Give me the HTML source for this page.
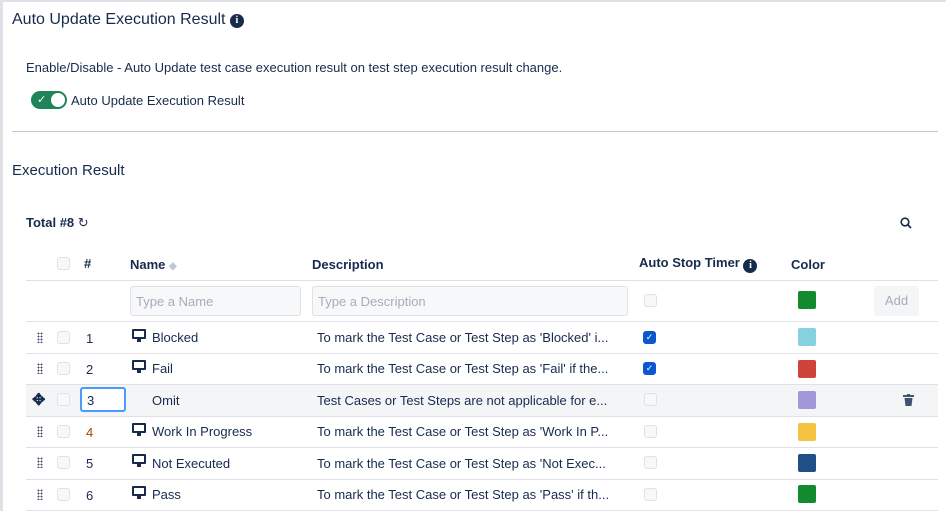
<!DOCTYPE html>
<html><head><style>
*{box-sizing:border-box;margin:0;padding:0}
body{width:946px;height:511px;overflow:hidden;background:#fff;font-family:"Liberation Sans",sans-serif;color:#172b4d;position:relative}
.abs{position:absolute}
.frame{position:absolute;left:0;top:0;width:946px;height:511px;border-left:3px solid #dfe1e6;border-top:2px solid #dfe1e6}
.info{display:inline-block;width:14px;height:14px;border-radius:50%;background:#172b4d;color:#fff;font-size:10px;font-weight:bold;text-align:center;line-height:14px;font-family:"Liberation Serif",serif}
.cb{position:absolute;width:13px;height:13px;border:1px solid #dfe1e6;border-radius:3px;background:#f7f8f9}
.cbc{background:#0c57d0;border-color:#0c57d0;color:#fff;font-size:9px;line-height:11px;text-align:center}
.line{position:absolute;left:26px;width:912px;height:1px;background:#dfe1e6}
.t{position:absolute;font-size:13px;white-space:nowrap}
.sw{position:absolute;left:798px;width:18px;height:18px;border-radius:2px}
.drag{position:absolute;left:37px;width:6px;height:11px;background-image:radial-gradient(circle,#42526e 0.8px,transparent 1px);background-size:3px 3px}
.mon{position:absolute;left:132px;width:14px;height:10px;border:2px solid #172b4d;border-radius:1px}
.mon:after{content:"";position:absolute;left:3px;top:8px;width:4px;height:3px;background:#172b4d}
</style></head><body>
<div class="frame"></div>
<div class="t" style="left:12px;top:11px;font-size:16px">Auto Update Execution Result <span class="info" style="vertical-align:1px">i</span></div>
<div class="t" style="left:26px;top:60px;font-size:13px">Enable/Disable - Auto Update test case execution result on test step execution result change.</div>
<div class="abs" style="left:31px;top:91px;width:36px;height:18px;border-radius:9px;background:#1f845a"><span style="position:absolute;left:6px;top:2px;color:#fff;font-size:11px">✓</span><div style="position:absolute;right:2px;top:2px;width:14px;height:14px;border-radius:50%;background:#fff"></div></div>
<div class="t" style="left:71px;top:93px;font-size:13px">Auto Update Execution Result</div>
<div class="abs" style="left:12px;top:131px;width:926px;height:1px;background:#c1c7d0"></div>
<div class="t" style="left:12px;top:162px;font-size:15px">Execution Result</div>
<div class="t" style="left:26px;top:215px;font-weight:bold;font-size:13px">Total #8 <span style="font-weight:normal">↻</span></div>
<svg class="abs" style="left:900px;top:217px" width="12" height="12" viewBox="0 0 12 12"><circle cx="5" cy="5" r="3.8" fill="none" stroke="#172b4d" stroke-width="1.6"/><line x1="8" y1="8" x2="11" y2="11" stroke="#172b4d" stroke-width="1.8"/></svg>
<div class="cb" style="left:57px;top:257px"></div>
<div class="t" style="left:84px;top:256px;font-weight:bold">#</div>
<div class="t" style="left:130px;top:257px;font-weight:bold">Name <span style="color:#c1c7d0;font-size:10px">◆</span></div>
<div class="t" style="left:312px;top:257px;font-weight:bold">Description</div>
<div class="t" style="left:639px;top:255px;font-weight:bold">Auto Stop Timer <span class="info" style="vertical-align:-1px">i</span></div>
<div class="t" style="left:791px;top:257px;font-weight:bold">Color</div>
<div class="line" style="top:280px"></div>
<div class="abs" style="left:130px;top:286px;width:171px;height:30px;border:1px solid #dfe1e6;border-radius:3px;background:#f7f8f9;font-size:13px;color:#a5adba;padding:7px 5px">Type a Name</div>
<div class="abs" style="left:312px;top:286px;width:316px;height:30px;border:1px solid #dfe1e6;border-radius:3px;background:#f7f8f9;font-size:13px;color:#a5adba;padding:7px 5px">Type a Description</div>
<div class="cb" style="left:644px;top:294px"></div>
<div class="sw" style="top:291px;background:#138a2e"></div>
<div class="abs" style="left:874px;top:286px;width:45px;height:30px;border-radius:3px;background:#f4f5f7;color:#a5adba;font-size:13px;text-align:center;line-height:30px">Add</div>
<div class="line" style="top:321px"></div>
<div class="abs" style="left:26px;top:385px;width:912px;height:31px;background:#f4f5f7"></div>
<div class="line" style="top:353px"></div><div class="line" style="top:384px"></div><div class="line" style="top:416px"></div><div class="line" style="top:447px"></div><div class="line" style="top:479px"></div><div class="line" style="top:510px"></div>

<div class="drag" style="top:332px"></div><div class="cb" style="left:57px;top:331px"></div><div class="t" style="left:86px;top:331px">1</div><div class="mon" style="top:329px"></div><div class="t" style="left:152px;top:330px">Blocked</div><div class="t" style="left:317px;top:330px">To mark the Test Case or Test Step as 'Blocked' i...</div><div class="cb cbc" style="left:643px;top:331px">✓</div><div class="sw" style="top:328px;background:#87d0e0"></div>

<div class="drag" style="top:363px"></div><div class="cb" style="left:57px;top:362px"></div><div class="t" style="left:86px;top:362px">2</div><div class="mon" style="top:360px"></div><div class="t" style="left:152px;top:361px">Fail</div><div class="t" style="left:317px;top:361px">To mark the Test Case or Test Step as 'Fail' if the...</div><div class="cb cbc" style="left:643px;top:362px">✓</div><div class="sw" style="top:360px;background:#cf4338"></div>

<div class="t" style="left:32px;top:390px;font-size:16px;font-weight:bold">✥</div><div class="cb" style="left:57px;top:393px"></div><div class="abs" style="left:80px;top:387px;width:46px;height:25px;border:2px solid #4c9aff;border-radius:3px;background:#fff;font-size:13px;padding:4px 5px">3</div><div class="t" style="left:152px;top:393px">Omit</div><div class="t" style="left:317px;top:393px">Test Cases or Test Steps are not applicable for e...</div><div class="cb" style="left:644px;top:393px"></div><div class="sw" style="top:391px;background:#a197d9"></div>
<svg class="abs" style="left:903px;top:394px" width="11" height="12" viewBox="0 0 11 12"><rect x="0" y="1" width="11" height="2" fill="#42526e"/><rect x="4" y="0" width="3" height="2" fill="#42526e"/><path d="M1.5 4h8l-1 8h-6z" fill="#42526e"/></svg>

<div class="drag" style="top:426px"></div><div class="cb" style="left:57px;top:425px"></div><div class="t" style="left:86px;top:425px;color:#a54800">4</div><div class="mon" style="top:423px"></div><div class="t" style="left:152px;top:424px">Work In Progress</div><div class="t" style="left:317px;top:424px">To mark the Test Case or Test Step as 'Work In P...</div><div class="cb" style="left:644px;top:425px"></div><div class="sw" style="top:423px;background:#f5c33f"></div>

<div class="drag" style="top:457px"></div><div class="cb" style="left:57px;top:456px"></div><div class="t" style="left:86px;top:456px">5</div><div class="mon" style="top:454px"></div><div class="t" style="left:152px;top:456px">Not Executed</div><div class="t" style="left:317px;top:456px">To mark the Test Case or Test Step as 'Not Exec...</div><div class="cb" style="left:644px;top:456px"></div><div class="sw" style="top:454px;background:#1f4f85"></div>

<div class="drag" style="top:489px"></div><div class="cb" style="left:57px;top:488px"></div><div class="t" style="left:86px;top:488px">6</div><div class="mon" style="top:486px"></div><div class="t" style="left:152px;top:487px">Pass</div><div class="t" style="left:317px;top:487px">To mark the Test Case or Test Step as 'Pass' if th...</div><div class="cb" style="left:644px;top:488px"></div><div class="sw" style="top:485px;background:#138a2e"></div>
</body></html>
